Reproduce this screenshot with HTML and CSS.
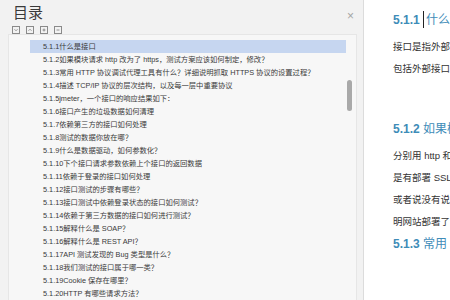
FILE: index.html
```html
<!DOCTYPE html>
<html lang="zh-CN">
<head>
    <meta charset="UTF-8">
    <title>目录</title>
    <link rel="stylesheet" href="styles.css">
</head>
<body>
    <div class="app">
        <aside class="toc">
            <div class="toc-head">
                <h2 class="toc-title">目录</h2>
                <span class="toc-close">×</span>
            </div>
            <div class="toc-tools">
                <span class="tool">
                    <svg viewBox="0 0 8 8"><polyline points="2,3 4,5 6,3" fill="none" stroke="#666" stroke-width="0.9"/></svg>
                </span>
                <span class="tool">
                    <svg viewBox="0 0 8 8"><polyline points="2,5 4,3 6,5" fill="none" stroke="#666" stroke-width="0.9"/></svg>
                </span>
                <span class="tool">
                    <svg viewBox="0 0 8 8"><path d="M2 4H6M4 2V6" stroke="#666" stroke-width="0.9"/></svg>
                </span>
                <span class="tool">
                    <svg viewBox="0 0 8 8"><path d="M2 4H6" stroke="#666" stroke-width="0.9"/></svg>
                </span>
            </div>
            <div class="toc-body">
                <ul class="toc-list">
                    <li class="active">5.1.1什么是接口</li>
                    <li>5.1.2如果模块请求 http 改为了 https，测试方案应该如何制定，修改？</li>
                    <li>5.1.3常用 HTTP 协议调试代理工具有什么？详细说明抓取 HTTPS 协议的设置过程？</li>
                    <li>5.1.4描述 TCP/IP 协议的层次结构，以及每一层中重要协议</li>
                    <li>5.1.5jmeter，一个接口的响应结果如下：</li>
                    <li>5.1.6接口产生的垃圾数据如何清理</li>
                    <li>5.1.7依赖第三方的接口如何处理</li>
                    <li>5.1.8测试的数据你放在哪？</li>
                    <li>5.1.9什么是数据驱动，如何参数化？</li>
                    <li>5.1.10下个接口请求参数依赖上个接口的返回数据</li>
                    <li>5.1.11依赖于登录的接口如何处理</li>
                    <li>5.1.12接口测试的步骤有哪些？</li>
                    <li>5.1.13接口测试中依赖登录状态的接口如何测试？</li>
                    <li>5.1.14依赖于第三方数据的接口如何进行测试？</li>
                    <li>5.1.15解释什么是 SOAP？</li>
                    <li>5.1.16解释什么是 REST API？</li>
                    <li>5.1.17API 测试发现的 Bug 类型是什么？</li>
                    <li>5.1.18我们测试的接口属于哪一类？</li>
                    <li>5.1.19Cookie 保存在哪里？</li>
                    <li>5.1.20HTTP 有哪些请求方法？</li>
                </ul>
                <div class="toc-scroll"></div>
            </div>
        </aside>

        <main class="doc">
            <section class="sec sec-first">
                <h3 class="sec-title"><b>5.1.1</b> <span class="caret"></span>什么是接口</h3>
                <p>接口是指外部系统与系统之间以及内部各个子系统间的交互点。</p>
                <p>包括外部接口、内部接口，内部接口又包括上层服务与下层服务接口。</p>
            </section>
            <section class="sec">
                <h3 class="sec-title"><b>5.1.2</b> 如果模块请求 http 改为了 https，测试方案应该如何制定，修改？</h3>
                <p>分别用 http 和 https 访问网站，看是否都能访问，</p>
                <p>是有部署 SSL 证书，是否所有资源都走 https，</p>
                <p>或者说没有说明网站是否强制跳转，如果都能访问，说</p>
                <p>明网站部署了 SSL 证书。</p>
            </section>
            <section class="sec">
                <h3 class="sec-title"><b>5.1.3</b> 常用 HTTP 协议调试代理工具有什么？</h3>
            </section>
        </main>
    </div>
</body>
</html>
```

FILE: styles.css
```css
* {
    margin: 0;
    padding: 0;
    box-sizing: border-box;
}

body {
    font-family: "Liberation Sans", "Noto Sans CJK SC", sans-serif;
    background: #fff;
    color: #333;
    overflow: hidden;
}

.app {
    display: flex;
    width: 450px;
    height: 300px;
    overflow: hidden;
}

/* 左侧目录面板 */
.toc {
    width: 364px;
    flex-shrink: 0;
    background: #f2f2f2;
    border-right: 1px solid #dcdcdc;
    padding: 0 6px 0 8px;
    display: flex;
    flex-direction: column;
}

.toc-head {
    display: flex;
    justify-content: space-between;
    align-items: flex-start;
    padding: 4px 0 0 5px;
}

.toc-title {
    font-size: 15px;
    font-weight: 400;
    line-height: 18px;
    color: #3a3a3a;
}

.toc-close {
    font-size: 12px;
    line-height: 12px;
    color: #a5a5a5;
    margin: 6px 3px 0 0;
}

.toc-tools {
    display: flex;
    gap: 6px;
    padding: 4px 0 0 4px;
    height: 17px;
}

.tool {
    width: 8px;
    height: 8px;
    border: 1px solid #8a8a8a;
    display: flex;
}

.tool svg {
    width: 100%;
    height: 100%;
}

.toc-body {
    position: relative;
    flex: 1;
    background: #f7f7f7;
    border: 1px solid #e6e6e6;
    border-bottom: none;
    padding: 5px 0 0 21px;
}

.toc-list {
    list-style: none;
    width: 316px;
}

.toc-list li {
    height: 13px;
    line-height: 13px;
    font-size: 7.3px;
    padding-left: 13px;
    color: #3a3a3a;
    white-space: nowrap;
}

.toc-list li.active {
    background: #c6d6f0;
}

.toc-scroll {
    position: absolute;
    top: 45px;
    right: 4px;
    width: 5px;
    height: 31px;
    border-radius: 3px;
    background: #a9a9a9;
}

/* 右侧正文 */
.doc {
    flex: 1;
    background: #fff;
    padding: 9px 0 0 29px;
    overflow: hidden;
    white-space: nowrap;
}

.sec-title {
    font-size: 12px;
    font-weight: 400;
    line-height: 22px;
    color: #3e8cb8;
    margin-bottom: 5px;
}

.sec-title b {
    font-weight: 700;
}

.caret {
    display: inline-block;
    width: 1px;
    height: 17px;
    background: #222;
    vertical-align: -4px;
    margin: 0 2px 0 0;
}

.doc p {
    font-size: 9.5px;
    line-height: 22px;
    color: #333;
}

.sec-first {
    margin-bottom: 38px;
}

.sec + .sec {
    margin-top: 0;
}
```
